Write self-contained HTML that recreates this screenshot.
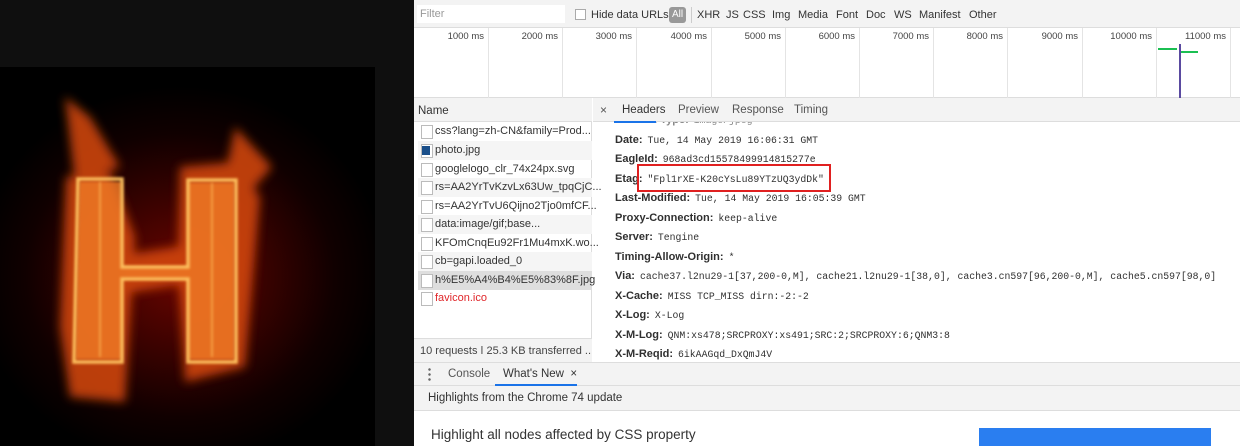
<!DOCTYPE html>
<html><head><meta charset="utf-8"><style>
*{margin:0;padding:0;box-sizing:border-box}
body{width:1240px;height:446px;overflow:hidden;background:#0f0f0f;position:relative;font-family:"Liberation Sans",sans-serif;font-size:11px;color:#333}
.a{position:absolute}
.m{font-family:"Liberation Mono",monospace;font-size:9.8px;color:#303030}
.row{position:absolute;left:615px;white-space:nowrap}
.row b{font-weight:bold;color:#303030;margin-right:5px}
.nm{position:absolute;left:418px;width:174px;height:19px;white-space:nowrap;padding-left:17px;line-height:19px;font-size:11px;color:#333}
.nm:before{content:"";position:absolute;left:3px;top:3px;width:10px;height:12px;border:1px solid #bbb;background:#fff}
.ft{position:absolute;top:9px;font-size:11px;color:#333}
</style></head><body>
<!-- image -->
<div class="a" style="left:0;top:67px;width:375px;height:379px;background:radial-gradient(ellipse 55% 50% at 48% 55%,#6a0500 0%,#3a0200 40%,#100000 75%,#000 100%)"></div>
<svg class="a" style="left:0;top:67px" width="375" height="379">
<defs><filter id="b"><feGaussianBlur stdDeviation="5"/></filter><filter id="c"><feGaussianBlur stdDeviation="1.2"/></filter></defs>
<g filter="url(#b)" fill="#d84a10" opacity="0.85">
<path d="M66 110 L110 105 L135 170 L125 335 L70 330 L60 260 Z"/>
<path d="M180 100 L235 95 L260 130 L245 300 L185 315 L178 200 Z"/>
<path d="M110 190 L190 178 L195 215 L115 228 Z"/>
<path d="M65 30 L90 50 L120 100 L75 115 Z"/><path d="M235 60 L272 100 L250 125 L225 110 Z"/>
</g>
<g filter="url(#c)" fill="#f07a28" opacity="0.8">
<path d="M80 115 L122 115 L122 292 L76 292 Z"/><path d="M188 116 L234 116 L234 292 L188 292 Z"/><path d="M122 200 L188 200 L188 212 L122 212 Z"/>
</g>
<g fill="none" stroke="#ffc460" stroke-width="3.5" opacity="0.95" filter="url(#c)">
<path d="M78 112 L122 112 L122 200 L188 200 L188 113 L236 113 L236 295 L188 295 L188 212 L122 212 L122 295 L74 295 Z"/>
<path d="M100 115 L100 290 M212 116 L212 290" stroke-width="2" opacity="0.6"/>
</g>
</svg>
<!-- devtools -->
<div class="a" style="left:414px;top:0;width:826px;height:446px;background:#fff"></div>
<div class="a" style="left:414px;top:0;width:826px;height:28px;background:#f3f3f3;border-bottom:1px solid #ddd"></div>
<div class="a" style="left:417px;top:5px;width:148px;height:18px;background:#fff;color:#999;padding:3px 3px">Filter</div>
<div class="a" style="left:575px;top:9px;width:11px;height:11px;border:1px solid #aaa;background:#fff"></div>
<div class="ft" style="left:591px">Hide data URLs</div>
<div class="a" style="left:669px;top:7px;width:17px;height:16px;background:#999;border-radius:3px;color:#fff;text-align:center;line-height:16px;font-size:10px">All</div>
<div class="a" style="left:691px;top:7px;width:1px;height:16px;background:#ccc"></div>
<div class="ft" style="left:697px">XHR</div><div class="ft" style="left:726px">JS</div><div class="ft" style="left:743px">CSS</div><div class="ft" style="left:772px">Img</div><div class="ft" style="left:798px">Media</div><div class="ft" style="left:836px">Font</div><div class="ft" style="left:866px">Doc</div><div class="ft" style="left:894px">WS</div><div class="ft" style="left:919px">Manifest</div><div class="ft" style="left:969px">Other</div>
<!-- timeline -->
<div class="a" style="left:414px;top:28px;width:826px;height:70px;background:#fff;border-bottom:1px solid #ddd"></div>
<div id="tl"></div>
<div class="a" style="left:1158px;top:48px;width:19px;height:2px;background:#1bbf52"></div>
<div class="a" style="left:1180px;top:51px;width:18px;height:2px;background:#1bbf52"></div>
<div class="a" style="left:1179px;top:44px;width:2px;height:54px;background:#5a4aa0"></div>
<!-- name panel -->
<div class="a" style="left:414px;top:98px;width:178px;height:265px;background:#fff;border-right:1px solid #ddd"></div>
<div class="a" style="left:414px;top:98px;width:178px;height:24px;background:#f3f3f3;border-bottom:1px solid #ddd;padding:7px 4px;font-size:11.5px">Name</div>
<div class="nm" style="top:122px">css?lang=zh-CN&amp;family=Prod...</div>
<div class="nm" style="top:141px;background:#f5f5f5">photo.jpg</div>
<div class="a" style="left:422px;top:146px;width:8px;height:9px;background:#1a4f8a"></div>
<div class="nm" style="top:160px">googlelogo_clr_74x24px.svg</div>
<div class="nm" style="top:178px;background:#f5f5f5">rs=AA2YrTvKzvLx63Uw_tpqCjC...</div>
<div class="nm" style="top:197px">rs=AA2YrTvU6Qijno2Tjo0mfCF...</div>
<div class="nm" style="top:215px;background:#f5f5f5">data:image/gif;base...</div>
<div class="nm" style="top:234px">KFOmCnqEu92Fr1Mu4mxK.wo...</div>
<div class="nm" style="top:252px;background:#f5f5f5">cb=gapi.loaded_0</div>
<div class="nm" style="top:271px;background:#dedede">h%E5%A4%B4%E5%83%8F.jpg</div>
<div class="nm" style="top:289px;color:#e0262a">favicon.ico</div>
<div class="a" style="left:414px;top:338px;width:178px;height:25px;background:#f3f3f3;border-top:1px solid #ddd;padding:6px 6px;color:#444;font-size:11px;white-space:nowrap;overflow:hidden">10 requests ǀ 25.3 KB transferred ...</div>
<!-- headers panel -->
<div class="row" style="top:114px;color:#888"><b style="color:#888">Content-Type:</b><span class="m" style="color:#888">image/jpeg</span></div>
<div class="a" style="left:593px;top:98px;width:647px;height:24px;background:#f3f3f3;border-bottom:1px solid #ddd"></div>
<div class="a" style="left:600px;top:103px;color:#555;font-size:12px">×</div>
<div class="a" style="left:622px;top:104px;font-size:11.5px;color:#333">Headers</div>
<div class="a" style="left:678px;top:104px;font-size:11.5px;color:#555">Preview</div>
<div class="a" style="left:732px;top:104px;font-size:11.5px;color:#555">Response</div>
<div class="a" style="left:794px;top:104px;font-size:11.5px;color:#555">Timing</div>
<div class="a" style="left:614px;top:121px;width:42px;height:2px;background:#1a73e8"></div>
<div class="row" style="top:134px"><b>Date:</b><span class="m">Tue, 14 May 2019 16:06:31 GMT</span></div>
<div class="row" style="top:153px"><b>EagleId:</b><span class="m">968ad3cd15578499914815277e</span></div>
<div class="row" style="top:173px"><b>Etag:</b><span class="m">"Fpl1rXE-K20cYsLu89YTzUQ3ydDk"</span></div>
<div class="a" style="left:637px;top:164px;width:194px;height:28px;border:2px solid #e02020"></div>
<div class="row" style="top:192px"><b>Last-Modified:</b><span class="m">Tue, 14 May 2019 16:05:39 GMT</span></div>
<div class="row" style="top:212px"><b>Proxy-Connection:</b><span class="m">keep-alive</span></div>
<div class="row" style="top:231px"><b>Server:</b><span class="m">Tengine</span></div>
<div class="row" style="top:251px"><b>Timing-Allow-Origin:</b><span class="m">*</span></div>
<div class="row" style="top:270px"><b>Via:</b><span class="m">cache37.l2nu29-1[37,200-0,M], cache21.l2nu29-1[38,0], cache3.cn597[96,200-0,M], cache5.cn597[98,0]</span></div>
<div class="row" style="top:290px"><b>X-Cache:</b><span class="m">MISS TCP_MISS dirn:-2:-2</span></div>
<div class="row" style="top:309px"><b>X-Log:</b><span class="m">X-Log</span></div>
<div class="row" style="top:329px"><b>X-M-Log:</b><span class="m">QNM:xs478;SRCPROXY:xs491;SRC:2;SRCPROXY:6;QNM3:8</span></div>
<div class="row" style="top:348px"><b>X-M-Reqid:</b><span class="m">6ikAAGqd_DxQmJ4V</span></div>
<!-- drawer -->
<div class="a" style="left:414px;top:362px;width:826px;height:24px;background:#f3f3f3;border-top:1px solid #ddd;border-bottom:1px solid #ddd"></div>
<div class="a" style="left:428px;top:367px;width:3px;height:14px;background:radial-gradient(circle,#666 1px,transparent 1.5px) 0 0/3px 5px"></div>
<div class="a" style="left:448px;top:368px;color:#555;font-size:11.5px">Console</div>
<div class="a" style="left:503px;top:368px;color:#333;font-size:11.5px">What's New&nbsp; ×</div>
<div class="a" style="left:495px;top:384px;width:82px;height:2px;background:#1a73e8"></div>
<div class="a" style="left:414px;top:386px;width:826px;height:25px;background:#f3f3f3;border-bottom:1px solid #ddd;padding:6px 14px;font-size:11.5px;color:#333">Highlights from the Chrome 74 update</div>
<div class="a" style="left:431px;top:427px;font-size:13.5px;color:#333">Highlight all nodes affected by CSS property</div>
<div class="a" style="left:979px;top:428px;width:232px;height:18px;background:#2a7ef0"></div>
<script>
var h='';for(var i=1;i<=11;i++){var x=Math.round(488+74.2*(i-1));h+='<div class="a" style="left:'+(x-70)+'px;top:31px;width:66px;text-align:right;font-size:9.5px;color:#444">'+i+'000 ms</div><div class="a" style="left:'+x+'px;top:28px;width:1px;height:70px;background:#e4e4e4"></div>';}
document.getElementById('tl').outerHTML=h;
</script>
</body></html>
